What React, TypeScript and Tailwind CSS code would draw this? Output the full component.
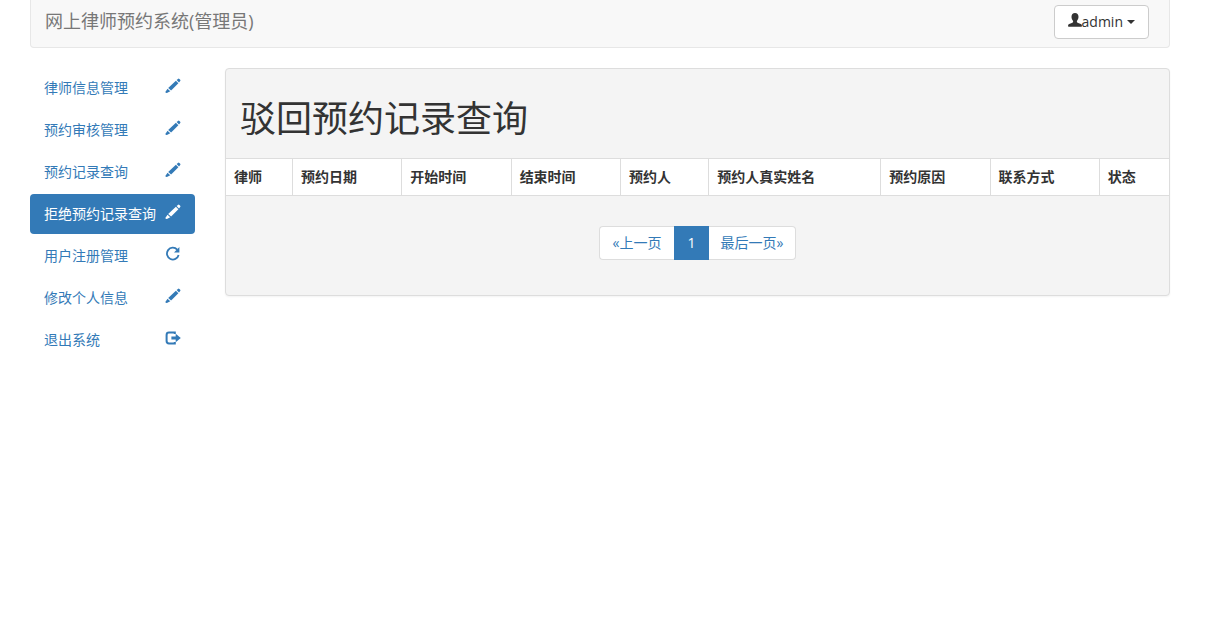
import type { ComponentType } from "react";

interface IconProps {
  className?: string;
}

function PencilIcon({ className }: IconProps) {
  return (
    <svg viewBox="0 0 16 16" className={className} fill="currentColor" aria-hidden="true">
      <path d="M11.600 2 13 .9a1.100 1.100 0 0 1 1.400 0l.8.8a1.100 1.100 0 0 1 0 1.400L14 4.400Z" />
      <path d="m10.900 2.700 2.500 2.500-7.300 7.300-2.900-2.500Z" />
      <path d="m2.500 10.800 2.800 2.500L1.900 14.900.6 14.800.5 13.800Z" />
    </svg>
  );
}

function RepeatIcon({ className }: IconProps) {
  return (
    <svg viewBox="0 0 16 16" className={className} aria-hidden="true">
      <path d="M12.200 3.600a5.900 5.900 0 1 0 1.400 5.400" fill="none" stroke="currentColor" strokeWidth="1.800" />
      <path d="M14.400 1v5.600H9Z" fill="currentColor" />
    </svg>
  );
}

function LogOutIcon({ className }: IconProps) {
  return (
    <svg viewBox="0 0 16 16" className={className} aria-hidden="true">
      <path d="M9.800 4V2.600H4Q1.600 2.600 1.600 5v6Q1.600 13.400 4 13.400h5.800V12" fill="none" stroke="currentColor" strokeWidth="2" />
      <path d="M6.400 6.600h4.300V3.800l5.100 4.200-5.100 4.200V9.400H6.400Z" fill="currentColor" />
    </svg>
  );
}

function UserIcon({ className }: IconProps) {
  return (
    <svg viewBox="0 0 14 14" className={className} fill="currentColor" aria-hidden="true">
      <path d="M7 0c2.200 0 3.500 1.500 3.500 3.700 0 1.600-.6 3.200-1.600 4.200v.9c0 .5.3.7.7.9l3.200 1.400c.8.4 1.100.8 1.100 1.500v.6c0 .3-.2.5-.5.5H.6c-.3 0-.5-.2-.5-.5v-.6c0-.7.3-1.100 1.100-1.500l3.200-1.400c.4-.2.7-.4.7-.9v-.9c-1-1-1.600-2.600-1.600-4.200C3.500 1.500 4.800 0 7 0Z" />
    </svg>
  );
}

interface NavItem {
  label: string;
  icon: ComponentType<IconProps>;
  active?: boolean;
}

const NAV: NavItem[] = [
  { label: "律师信息管理", icon: PencilIcon },
  { label: "预约审核管理", icon: PencilIcon },
  { label: "预约记录查询", icon: PencilIcon },
  { label: "拒绝预约记录查询", icon: PencilIcon, active: true },
  { label: "用户注册管理", icon: RepeatIcon },
  { label: "修改个人信息", icon: PencilIcon },
  { label: "退出系统", icon: LogOutIcon },
];

const COLUMNS = ["律师", "预约日期", "开始时间", "结束时间", "预约人", "预约人真实姓名", "预约原因", "联系方式", "状态"];

function Header() {
  return (
    <header className="flex h-12 items-start justify-between rounded-b border border-t-0 border-[#e7e7e7] bg-[#f8f8f8] pr-5 pl-[14px]">
      <a href="#" className="py-[11px] text-lg leading-5 text-[#777]">网上律师预约系统(管理员)</a>
      <button type="button" className="mt-[5px] flex h-[34px] items-center rounded border border-[#ccc] bg-white px-[13px] leading-5">
        <UserIcon className="mb-1 size-[14px]" />
        admin
        <span className="ml-1 border-x-4 border-t-4 border-x-transparent border-t-[#333]" />
      </button>
    </header>
  );
}

function Sidebar() {
  return (
    <nav className="w-[165px] shrink-0">
      <ul className="flex flex-col gap-0.5">
        {NAV.map(({ label, icon: Icon, active }) => (
          <li key={label}>
            <a
              href="#"
              aria-current={active ? "page" : undefined}
              className={`flex h-10 items-center justify-between rounded px-[14px] whitespace-nowrap ${active ? "bg-[#337ab7] text-white" : "text-[#337ab7]"}`}
            >
              {label}
              <Icon className="mb-1 size-4 shrink-0" />
            </a>
          </li>
        ))}
      </ul>
    </nav>
  );
}

function Pagination() {
  return (
    <ul className="flex justify-center py-[30px] leading-5 text-[#337ab7]">
      <li><a href="#" className="block rounded-l border border-r-0 border-[#ddd] bg-white px-[13px] py-1.5">«上一页</a></li>
      <li><a href="#" aria-current="page" className="block border border-[#337ab7] bg-[#337ab7] px-3 py-1.5 text-white">1</a></li>
      <li><a href="#" className="block rounded-r border border-l-0 border-[#ddd] bg-white px-3 py-1.5">最后一页»</a></li>
    </ul>
  );
}

export default function App() {
  return (
    <div className="min-h-screen bg-white pr-[21px] font-['Open_Sans','Noto_Sans_CJK_SC',sans-serif] text-sm text-[#333]">
      <div className="mx-auto max-w-[1170px] px-[15px]">
        <Header />
        <div className="mt-5 flex items-start gap-[30px]">
          <Sidebar />
          <main className="min-w-0 flex-1 rounded border border-[#ddd] bg-[#f4f4f4] pb-[5px] shadow-xs">
            <h1 className="px-[14px] pt-[30px] pb-5 text-4xl leading-[39px]">驳回预约记录查询</h1>
            <table className="w-full border-y border-[#ddd] bg-white text-left leading-5">
              <thead>
                <tr>
                  {COLUMNS.map((name) => (
                    <th key={name} scope="col" className="border-r border-[#ddd] p-2 font-bold whitespace-nowrap last:border-r-0 last:pr-[10px]">{name}</th>
                  ))}
                </tr>
              </thead>
            </table>
            <Pagination />
          </main>
        </div>
      </div>
    </div>
  );
}
